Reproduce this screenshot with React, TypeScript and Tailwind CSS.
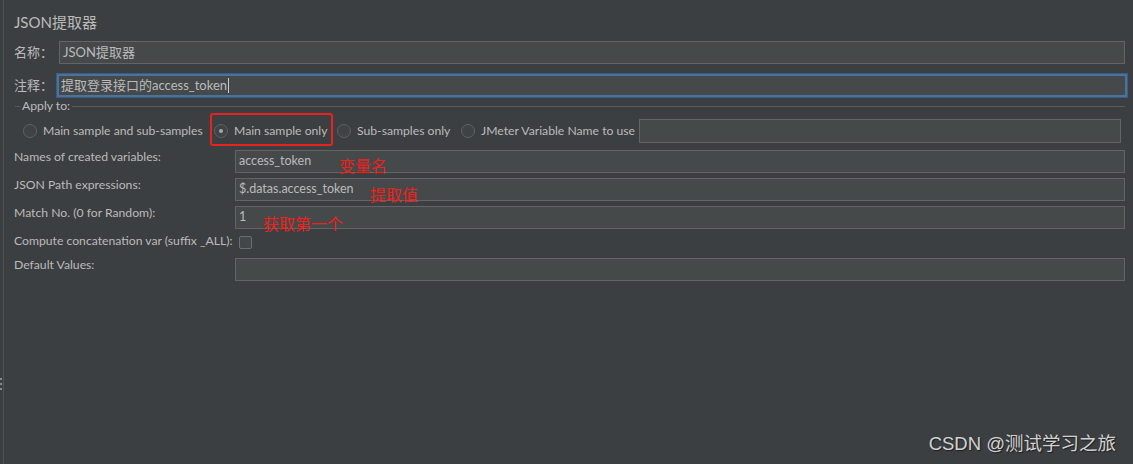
import React from "react";

const FONT = "font-['Lato','Noto_Sans_CJK_SC',sans-serif]";

function Radio({ checked, label, width }: { checked?: boolean; label: string; width: string }) {
  return (
    <div className={`flex shrink-0 items-center ${width}`}>
      <div className="flex h-[14px] w-[14px] shrink-0 items-center justify-center rounded-full border border-[#5f6264] bg-[#3f4345]">
        {checked && <div className="h-[4px] w-[4px] rounded-full bg-[#a9a9a9]" />}
      </div>
      <span className="ml-[6px] whitespace-nowrap text-[12.2px] leading-[16px]">{label}</span>
    </div>
  );
}

function FieldRow({ label, value, note }: { label: string; value?: string; note?: React.ReactNode }) {
  return (
    <div className="flex h-[23px]">
      <div className="-mt-[1px] w-[221px] shrink-0 whitespace-nowrap text-[12.2px] leading-[16px]">{label}</div>
      <div className="relative flex flex-1 items-center border border-[#646464] bg-[#45494a] pl-[3px] text-[12.5px]">
        {value}
        {note}
      </div>
    </div>
  );
}

function Note({ text, pos }: { text: string; pos: string }) {
  return (
    <span className={`absolute ${pos} whitespace-nowrap font-['Noto_Sans_CJK_SC',sans-serif] text-[16px] leading-[16px] text-[#f0201c]`}>
      {text}
    </span>
  );
}

export default function App() {
  return (
    <div className={`relative flex h-[464px] w-[1133px] overflow-hidden bg-[#3c3f41] text-[#bbbbbb] ${FONT}`}>
      <div className="w-[3px] shrink-0" />
      <div className="flex flex-1 flex-col border-l border-[#4e5254] pl-[10px] pr-[8px]">
        <div className="mt-[10px] h-[24px] text-[15px] leading-[24px]">JSON提取器</div>

        <div className="mt-[7px] flex h-[23px]">
          <div className="w-[45px] shrink-0 text-[13px] leading-[23px]">名称：</div>
          <div className="flex flex-1 items-center border border-[#646464] bg-[#45494a] pl-[3px] text-[13px]">JSON提取器</div>
        </div>

        <div className="mt-[10px] flex h-[23px]">
          <div className="w-[43px] shrink-0 text-[13px] leading-[23px]">注释：</div>
          <div className="-mr-[2px] flex flex-1 items-center border-2 border-[#4a72a0] bg-[#45494a] pl-[2px] text-[13px] shadow-[0_0_0_1px_#3d5c7e]">
            提取登录接口的access_token
            <span className="ml-[1px] h-[15px] w-px bg-[#cccccc]" />
          </div>
        </div>

        <div className="mt-[2px] flex h-[14px] items-center">
          <div className="ml-[1px] h-px w-[5px] bg-[#575a5c]" />
          <span className="px-[2px] text-[12.2px] leading-[14px]">Apply to:</span>
          <div className="h-px flex-1 bg-[#575a5c]" />
        </div>

        <div className="mt-[6px] flex h-[24px] items-center pl-[9px]">
          <Radio label="Main sample and sub-samples" width="w-[191px]" />
          <div className="relative">
            <Radio checked label="Main sample only" width="w-[123px]" />
            <div className="absolute left-[-4px] top-[-10px] h-[33px] w-[123px] rounded-[3px] border-2 border-[#e8231f]" />
          </div>
          <Radio label="Sub-samples only" width="w-[124px]" />
          <Radio label="JMeter Variable Name to use" width="w-[178px]" />
          <div className="mr-[4px] h-[24px] flex-1 border border-[#646464] bg-[#45494a]" />
        </div>

        <div className="mt-[7px]">
          <FieldRow label="Names of created variables:" value="access_token" note={<Note text="变量名" pos="left-[103px] top-[6px]" />} />
        </div>
        <div className="mt-[5px]">
          <FieldRow label="JSON Path expressions:" value="$.datas.access_token" note={<Note text="提取值" pos="left-[134px] top-[7px]" />} />
        </div>
        <div className="mt-[5px]">
          <FieldRow label="Match No. (0 for Random):" value="1" note={<Note text="获取第一个" pos="left-[27px] top-[8px]" />} />
        </div>

        <div className="mt-[4px] flex h-[20px]">
          <div className="w-[221px] shrink-0 whitespace-nowrap text-[12.2px] leading-[16px]">Compute concatenation var (suffix _ALL):</div>
          <div className="ml-[4px] mt-[3px] h-[13px] w-[13px] rounded-[2px] border border-[#6b6e70] bg-[#43474a]" />
        </div>

        <div className="mt-[5px]">
          <FieldRow label="Default Values:" />
        </div>
      </div>

      <div className="absolute left-0 top-[378px] flex flex-col gap-[3px]">
        <div className="h-[2px] w-[2px] bg-[#8a8a8a]" />
        <div className="h-[2px] w-[2px] bg-[#8a8a8a]" />
        <div className="h-[2px] w-[2px] bg-[#8a8a8a]" />
      </div>

      <div className="absolute right-[17px] top-[432px] whitespace-nowrap font-['Liberation_Sans','Noto_Sans_CJK_SC',sans-serif] text-[18.5px] leading-[24px] text-[#d2d2d2] [text-shadow:1px_1px_1px_#1e1e1e]">
        CSDN @测试学习之旅
      </div>
    </div>
  );
}
